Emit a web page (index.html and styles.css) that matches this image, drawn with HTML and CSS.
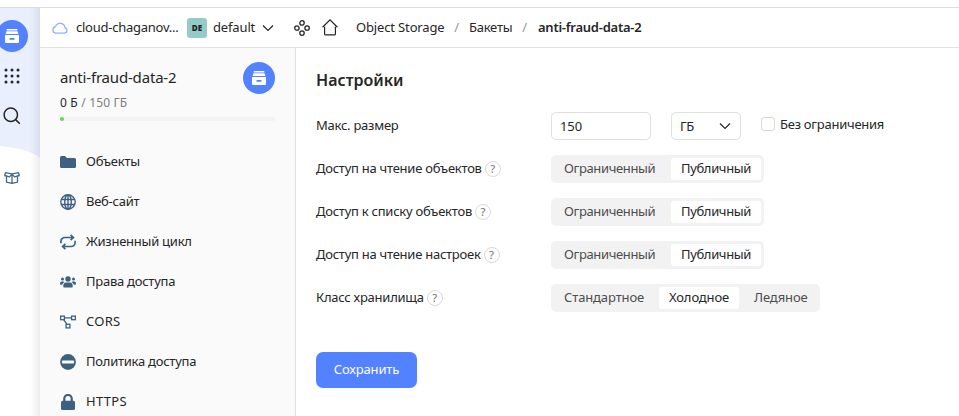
FILE: index.html
```html
<!DOCTYPE html>
<html lang="ru">
<head>
<meta charset="utf-8">
<title>anti-fraud-data-2</title>
<link rel="stylesheet" href="styles.css">
</head>
<body>
<svg class="defs" width="0" height="0">
  <symbol id="bucket" viewBox="0 0 16 16">
    <path fill="#fff" d="M3.200 1h9.600a.6.6 0 0 1 .6.6V2.400H2.600V1.600A.6.6 0 0 1 3.200 1zM2.500 3.300h11l.9 2.700H1.600zM1 7h14v7a1 1 0 0 1-1 1H2a1 1 0 0 1-1-1z"/>
    <rect x="5.500" y="10" width="5" height="1.700" rx=".5" fill="#5282ff"/>
  </symbol>
  <symbol id="chevron" viewBox="0 0 12 8"><path d="M1 1.500l5 5 5-5" fill="none" stroke="#262626" stroke-width="1.200"/></symbol>
</svg>
<div class="app">
  <nav class="rail">
    <svg class="wave" width="40" height="271" viewBox="0 0 40 271"><path d="M0 0C17 2 30 4 40 12V271H0z" fill="#fff"/></svg>
    <div class="round rail-service"><svg width="16" height="16"><use href="#bucket"/></svg></div>
    <svg class="rail-grid" width="16" height="16" viewBox="0 0 16 16" fill="#262626"><circle cx="2" cy="2" r="1.500"/><circle cx="8" cy="2" r="1.500"/><circle cx="14" cy="2" r="1.500"/><circle cx="2" cy="8" r="1.500"/><circle cx="8" cy="8" r="1.500"/><circle cx="14" cy="8" r="1.500"/><circle cx="2" cy="14" r="1.500"/><circle cx="8" cy="14" r="1.500"/><circle cx="14" cy="14" r="1.500"/></svg>
    <svg class="rail-search" width="18" height="18" viewBox="0 0 18 18" fill="none" stroke="#262626" stroke-width="1.500"><circle cx="7.800" cy="7.800" r="6.700"/><path d="M12.600 12.600l4.200 4.200"/></svg>
    <svg class="rail-box" width="16" height="14" viewBox="0 0 16 14" fill="none" stroke="#44698c" stroke-width="1.300" stroke-linejoin="round"><path d="M1.500 1.700L8 2.900l6.500-1.200.8 2.800-4.800 1.300L8 2.900 5.500 5.800.7 4.500zM2.500 5.500v5.700L8 12.300l5.500-1.100V5.500M8 3.500v8.500"/></svg>
  </nav>
  <div class="page">
    <header class="top">
      <svg class="cloud" width="16" height="12" viewBox="0 0 16 12" fill="none" stroke="#92acff" stroke-width="1.200"><path d="M3.500 11.200h9A2.700 2.700 0 0 0 13 5.900 4.900 4.900 0 0 0 3.500 4.600 3.400 3.400 0 0 0 3.500 11.200z"/></svg>
      <span class="cloud-name">cloud-chaganov...</span>
      <span class="badge">DE</span>
      <span class="folder-name">default</span>
      <svg class="chev" width="12" height="8"><use href="#chevron"/></svg>
      <svg class="dots" width="16" height="16" viewBox="0 0 16 16" fill="none" stroke="#262626" stroke-width="1.300"><circle cx="8" cy="2.900" r="2.200"/><circle cx="8" cy="13.100" r="2.200"/><circle cx="2.900" cy="8" r="2.200"/><circle cx="13.100" cy="8" r="2.200"/></svg>
      <svg class="home" width="16" height="17" viewBox="0 0 16 17" fill="none" stroke="#262626" stroke-width="1.200"><path d="M.6 8.200L8 .9l7.400 7.300M2.600 7.800v7.100q0 1 1 1h8.800q1 0 1-1V7.800"/></svg>
      <span class="crumb c1">Object Storage</span><span class="sep">/</span>
      <span class="crumb c2">Бакеты</span><span class="sep">/</span>
      <span class="crumb c3">anti-fraud-data-2</span>
    </header>
    <div class="body">
      <aside class="side">
        <div class="side-head">
          <div>
            <div class="bucket-name">anti-fraud-data-2</div>
            <div class="usage">0 Б <span>/ 150 ГБ</span></div>
          </div>
          <div class="round"><svg width="16" height="16"><use href="#bucket"/></svg></div>
        </div>
        <div class="progress"><i></i></div>
        <ul class="menu">
          <li><svg width="16" height="16" viewBox="0 0 16 16"><path fill="#3e6182" d="M1.500 2H5l2 2h7.500A1.500 1.500 0 0 1 16 5.500v7a1.500 1.500 0 0 1-1.500 1.500h-13A1.500 1.500 0 0 1 0 12.500v-9A1.500 1.500 0 0 1 1.500 2z"/></svg><span>Объекты</span></li>
          <li><svg width="16" height="16" viewBox="0 0 16 16" fill="none" stroke="#3e6182" stroke-width="1.400"><circle cx="8" cy="8" r="7.200"/><ellipse cx="8" cy="8" rx="3.300" ry="7.200"/><path d="M1.400 5.500h13.200M1.400 10.500h13.200M8 1v14"/></svg><span>Веб-сайт</span></li>
          <li><svg width="16" height="16" viewBox="0 0 16 16" fill="none" stroke="#3e6182" stroke-width="1.700"><path d="M.9 9.300V7.500A4 4 0 0 1 4.900 3.500h8.400M10.600.8l2.800 2.700-2.800 2.700M15.100 6.700v1.800a4 4 0 0 1-4 4H2.700M5.400 9.800l-2.800 2.700 2.800 2.700"/></svg><span>Жизненный цикл</span></li>
          <li><svg width="16" height="16" viewBox="0 0 16 16" fill="#3e6182"><circle cx="8" cy="5" r="2.700"/><circle cx="2.500" cy="5" r="1.500"/><circle cx="13.500" cy="5" r="1.500"/><path d="M3.200 12.600c0-2.600 1.100-4 3-4h3.600c1.900 0 3 1.400 3 4q0 1-1 1H4.200q-1 0-1-1zM0 9.500q0-2 1.500-2h1.700q1 0 1.200.8-1.700.7-2.200 2.500H.8q-.8 0-.8-1.300zM16 9.500q0-2-1.500-2h-1.700q-1 0-1.200.8 1.700.7 2.200 2.500h1.400q.8 0 .8-1.300z"/></svg><span>Права доступа</span></li>
          <li><svg width="16" height="16" viewBox="0 0 16 16" fill="none" stroke="#3e6182" stroke-width="1.300"><rect x=".6" y="2.100" width="3.800" height="3.600"/><rect x="11.600" y="2.100" width="3.800" height="3.600"/><rect x="6.100" y="10.300" width="3.800" height="3.600"/><path d="M4.500 3.900h7M3.700 5.700l3.300 4.800"/></svg><span class="latin">CORS</span></li>
          <li><svg width="16" height="16" viewBox="0 0 16 16"><circle cx="8" cy="8" r="7.900" fill="#3e6182"/><rect x="2" y="6.500" width="12" height="3" rx=".6" fill="#fafafa"/></svg><span>Политика доступа</span></li>
          <li><svg width="16" height="16" viewBox="0 0 16 16"><rect x="1" y="6.800" width="14" height="9.200" rx="1.500" fill="#3e6182"/><path d="M4.300 7.500V4.600a3.700 3.700 0 0 1 7.400 0v2.900" fill="none" stroke="#3e6182" stroke-width="2.200"/></svg><span class="latin">HTTPS</span></li>
        </ul>
      </aside>
      <main class="main">
        <h1>Настройки</h1>
        <form class="form">
          <div class="row"><label>Макс. размер</label>
            <div class="size"><span class="input">150</span><span class="select">ГБ<svg width="12" height="8"><use href="#chevron"/></svg></span><span class="check"><i></i>Без ограничения</span></div></div>
          <div class="row"><label>Доступ на чтение объектов<b>?</b></label><div class="seg pair"><span>Ограниченный</span><span class="on">Публичный</span></div></div>
          <div class="row"><label>Доступ к списку объектов<b>?</b></label><div class="seg pair"><span>Ограниченный</span><span class="on">Публичный</span></div></div>
          <div class="row"><label>Доступ на чтение настроек<b>?</b></label><div class="seg pair"><span>Ограниченный</span><span class="on">Публичный</span></div></div>
          <div class="row"><label>Класс хранилища<b>?</b></label><div class="seg triple"><span>Стандартное</span><span class="on">Холодное</span><span>Ледяное</span></div></div>
          <button type="button" class="save">Сохранить</button>
        </form>
      </main>
    </div>
  </div>
</div>
</body>
</html>
```
FILE: styles.css
```css
* { box-sizing: border-box; }
body { margin: 0; background: #fff; color: #262626; font: 13px/20px "Noto Sans", sans-serif; letter-spacing: -.25px; overflow: hidden; }
svg { display: block; flex: none; }
.defs { position: absolute; }
.app { display: flex; height: 416px; padding-top: 7px; }
.rail { position: relative; width: 40px; border-top: 1px solid #dcdcdc; background: #e9effd; display: flex; flex-direction: column; flex: none; }
.rail::after { content: ""; position: absolute; inset: 0 0 0 auto; width: 10px; background: linear-gradient(to right, rgba(0,0,0,0), rgba(0,0,0,.07)); }
.wave { position: absolute; left: 0; top: 138px; }
.round { width: 32px; height: 32px; border-radius: 50%; background: #5282ff; display: flex; align-items: center; justify-content: center; flex: none; }
.rail-service { margin: 12px 0 0 -4px; }
.rail-grid { margin: 16px 0 0 4px; }
.rail-search { margin: 23px 0 0 3px; }
.rail-box { position: relative; margin: 46px 0 0 4px; }
.page { flex: 1; min-width: 0; display: flex; flex-direction: column; }
.top { height: 41px; flex: none; border-top: 1px solid #dcdcdc; border-bottom: 1px solid #e2e2e2; display: flex; align-items: center; padding-left: 12px; white-space: nowrap; }
.top > span { padding-bottom: 2px; }
.cloud-name { width: 103px; margin-left: 8px; }
.top > .badge { width: 20px; height: 20px; padding: 0; margin-left: 8px; border-radius: 3px; background: #94cac8; font: 800 8px/20px "Open Sans", sans-serif; letter-spacing: 0; text-align: center; }
.folder-name { width: 42px; margin-left: 6px; letter-spacing: -.15px; }
.chev { margin-left: 7px; }
.dots { margin-left: 20px; }
.home { margin-left: 12px; }
.crumb { flex: none; }
.c1 { width: 88px; margin-left: 18px; letter-spacing: -.15px; }
.c2 { width: 43px; }
.c3 { font-weight: 600; margin-left: 1px; }
.sep { width: 25px; text-align: center; color: #999; }
.body { flex: 1; display: flex; min-height: 0; }
.side { width: 256px; background: #fafafa; border-right: 1px solid #dfdfdf; padding: 14px 20px 0; flex: none; overflow: hidden; }
.side-head { display: flex; justify-content: space-between; height: 55px; }
.bucket-name { font-size: 15px; line-height: 20px; margin-top: 5px; letter-spacing: -.18px; }
.usage { margin-top: 6px; font-size: 12px; line-height: 20px; letter-spacing: .18px; }
.usage span { color: #808080; }
.progress { height: 4px; border-radius: 2px; background: #f2f2f2; }
.progress i { display: block; width: 4px; height: 4px; border-radius: 50%; background: #62d94e; }
.menu { list-style: none; margin: 21px 0 0; padding: 0; }
.menu li { height: 40px; display: flex; align-items: center; gap: 10px; white-space: nowrap; }
.menu span { padding-bottom: 2px; }
.menu .latin { letter-spacing: .3px; }
.main { flex: 1; padding: 20px 20px 0; }
h1 { margin: 0; font-size: 16px; line-height: 24px; font-weight: 600; letter-spacing: 0; }
.form { margin-top: 20px; }
.row { display: flex; height: 28px; margin-bottom: 15px; }
label { width: 235px; line-height: 26px; display: flex; align-items: flex-start; flex: none; white-space: nowrap; }
label b { width: 16px; height: 16px; margin: 6px 0 0 3px; border: 1px solid #d9d9d9; border-radius: 50%; color: #808080; font-weight: 500; font-size: 11px; line-height: 14px; letter-spacing: 0; text-align: center; }
.size { display: flex; white-space: nowrap; }
.input, .select { height: 28px; border: 1px solid #e0e0e0; border-radius: 5px; line-height: 26px; padding-left: 8px; }
.input { width: 100px; letter-spacing: -.1px; }
.select { width: 70px; margin-left: 20px; line-height: 26px; display: flex; justify-content: space-between; align-items: center; padding-right: 9px; }
.check { display: flex; margin-left: 20px; line-height: 24px; gap: 5px; }
.check i { width: 14px; height: 14px; margin-top: 5px; border: 1px solid #d9d9d9; border-radius: 3px; }
.seg { display: flex; height: 28px; padding: 3px; border-radius: 5px; background: #f2f2f2; color: #4d4d4d; white-space: nowrap; }
.seg span { height: 22px; line-height: 20px; border-radius: 3px; padding-left: 10px; }
.seg .on { background: #fff; color: #262626; }
.pair { width: 213px; letter-spacing: -.35px; }
.pair span { width: 117px; }
.pair .on { width: 90px; }
.triple { width: 269px; letter-spacing: -.12px; }
.triple span { width: 105px; }
.triple .on { width: 80px; }
.triple span:last-child { width: 78px; padding-left: 15px; }
.save { display: block; margin: 40px 0 0; width: 101px; height: 36px; padding: 0 0 2px; border: 0; border-radius: 7px; background: #5282ff; color: #fff; font: 13px/34px "Noto Sans", sans-serif; letter-spacing: -.15px; }
```
